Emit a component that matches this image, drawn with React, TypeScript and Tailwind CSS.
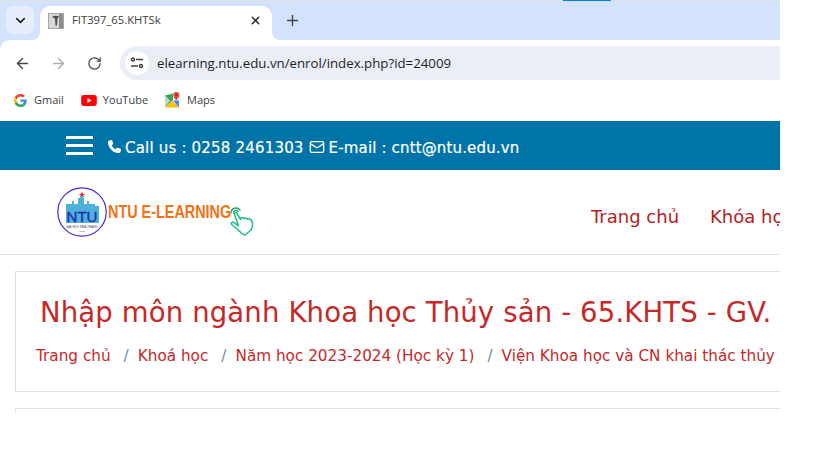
import React from 'react';
import { ChevronDown, X, Plus, ArrowLeft, ArrowRight, RotateCw, Mail } from 'lucide-react';

const ui = "font-['Open_Sans',sans-serif]";
const site = "font-['DejaVu_Sans',sans-serif]";

const GoogleIcon = () => (
  <svg width="13" height="13" viewBox="0 0 48 48">
    <path fill="#EA4335" d="M24 9.500c3.500 0 6.600 1.200 9.100 3.600l6.800-6.800C35.800 2.500 30.400 0 24 0 14.600 0 6.500 5.400 2.600 13.200l7.900 6.200C12.400 13.700 17.700 9.500 24 9.500z" />
    <path fill="#4285F4" d="M46.900 24.500c0-1.600-.1-3.100-.4-4.500H24v9h12.900c-.6 3-2.200 5.500-4.700 7.200l7.700 6c4.500-4.200 7-10.300 7-17.700z" />
    <path fill="#FBBC05" d="M10.500 28.600c-.5-1.500-.8-3-.8-4.600s.3-3.100.8-4.600l-7.900-6.200C.9 16.500 0 20.100 0 24s.9 7.500 2.600 10.800l7.900-6.200z" />
    <path fill="#34A853" d="M24 48c6.500 0 11.900-2.100 15.900-5.800l-7.700-6c-2.200 1.400-4.900 2.300-8.200 2.300-6.300 0-11.600-4.200-13.500-9.900l-7.900 6.200C6.500 42.600 14.600 48 24 48z" />
  </svg>
);

const YoutubeIcon = () => (
  <svg width="16" height="11" viewBox="0 0 17 12" className="block">
    <rect width="17" height="12" rx="3" fill="#f00" />
    <path d="M6.800 3.400 11.300 6l-4.500 2.600z" fill="#fff" />
  </svg>
);

const MapsIcon = () => (
  <svg width="15" height="16" viewBox="0 0 15 16" className="block">
    <path d="M0 3.500 8 1.500V8L0 15z" fill="#34a853" />
    <path d="M0 3.500 5 8.500 0 15z" fill="#c7d4cc" />
    <path d="M0 15.500 7 8.500l7 7z" fill="#fbbc04" />
    <path d="M8 8.500l6 7V8.500z" fill="#4285f4" />
    <path d="M11.300 0a3 3 0 0 0-3 3c0 2.200 3 5.500 3 5.500s3-3.300 3-5.500a3 3 0 0 0-3-3z" fill="#ea4335" />
    <circle cx="11.300" cy="3" r="1" fill="#a52714" />
  </svg>
);

const TuneIcon = () => (
  <svg width="14" height="12" viewBox="0 0 14 12" fill="none" stroke="#3c4043" strokeWidth="1.400">
    <circle cx="3" cy="2.500" r="1.500" />
    <path d="M6 2.500h7M1 9h7" />
    <circle cx="11" cy="9" r="1.500" />
  </svg>
);

const TabFavicon = () => (
  <svg width="16" height="16" viewBox="0 0 16 16" className="block">
    <rect x="0.500" y="0.500" width="15" height="15" fill="#d8d8d8" stroke="#a8a8a8" />
    <rect x="11" y="1" width="4" height="14" fill="#8c8c8c" />
    <path d="M4 4c2-1.500 5-1.500 7-.5L9.500 5.500l-.5 7H7.500L7 5.500z" fill="#4c4c4c" />
  </svg>
);

const PhoneIcon = () => (
  <svg width="13" height="13" viewBox="0 0 512 512" fill="#fff" className="block">
    <path d="M164.900 24.600c-7.700-18.600-28-28.500-47.400-23.200l-88 24C12.100 30.200 0 46 0 64c0 247.400 200.600 448 448 448 18 0 33.800-12.100 38.600-29.500l24-88c5.300-19.400-4.600-39.700-23.200-47.400l-96-40c-16.300-6.800-35.200-2.100-46.300 11.600L304.700 368c-70.400-33.300-127.400-90.300-160.700-160.700l49.300-40.300c13.700-11.200 18.400-30 11.600-46.300l-40-96z" />
  </svg>
);

const Logo = () => (
  <svg width="50" height="50" viewBox="0 0 50 50" className="block shrink-0">
    <circle cx="25" cy="25" r="24.200" fill="#fff" stroke="#4a2be0" strokeWidth="1.200" />
    <path d="M25 4.500l1 2.300 2.300.1-1.800 1.400.6 2.200-2.100-1.300-2.100 1.300.6-2.200-1.800-1.400 2.300-.1z" fill="#d33" />
    <path d="M9 36V17h6v-3h2v3h4V11h2V9h3v2h1v6h3v-3h2v3h6v2h4v17z" fill="#4fb0dc" />
    <text x="25" y="35" textAnchor="middle" fontSize="15" fontFamily="Liberation Sans" fontWeight="400" stroke="#1c2fb0" strokeWidth="0.400" fill="#1c2fb0">NTU</text>
    <text x="25" y="40.500" textAnchor="middle" fontSize="3" fontFamily="Liberation Sans" fill="#345">ĐẠI HỌC NHA TRANG</text>
    <text x="25" y="44.500" textAnchor="middle" fontSize="2.500" fontFamily="Liberation Sans" fill="#345">1959</text>
  </svg>
);

const HandIcon = () => (
  <svg width="26" height="30" viewBox="0 0 26 30" fill="none" stroke="#1fbf8a" strokeWidth="1.500" strokeLinejoin="round" strokeLinecap="round" className="block">
    <path d="M2 7a5 5 0 0 1 9-3" stroke="#25a56f" />
    <path d="M4.500 7a2.500 2.500 0 0 1 4.500-1.500" stroke="#25a56f" />
    <path d="M5.500 8.500c-.6-1.800 1.600-2.600 2.500-1l3.700 6 .2-1.500c1.400-.8 2.600-.4 3.100.8l.3-.6c1.300-.6 2.600-.2 3.100 1l.4-.3c2-.3 3.800 1 4.500 3.400.7 2.800-.2 6-1.800 8.200L16 29c-2.500-.5-4.500-2.300-6-4.200L2.600 18.500c-1.200-1.500.7-3.300 2.300-2.200l4.600 3.500z" />
  </svg>
);

const crumbs = ['Trang chủ', 'Khoá học', 'Năm học 2023-2024 (Học kỳ 1)', 'Viện Khoa học và CN khai thác thủy'];

export default function App() {
  return (
    <div className="h-[460px] w-[819px] overflow-hidden bg-white">
      <div className="w-[780px] overflow-hidden">
        {/* browser tab strip */}
        <div className="relative flex h-10 items-end bg-[#d3e3fd] pl-[6px]">
          <div className="absolute left-0 right-0 top-0 h-px bg-[#dfe1e5]" />
          <div className="absolute left-[563px] top-0 h-px w-[48px] bg-[#0b7de0]" />
          <button className="mb-[6px] flex h-[28px] w-[28px] items-center justify-center rounded-lg bg-[#e6eefb]">
            <ChevronDown size={15} strokeWidth={2.500} className="text-[#1f1f1f]" />
          </button>
          <div className={`relative ml-[6px] flex h-[34px] w-[232px] items-center rounded-t-[10px] bg-white pb-[5px] pl-[8px] pr-[10px] text-[11.250px] text-[#3c4043] ${ui}`}>
            <div className="absolute -left-[8px] bottom-0 h-2 w-2 bg-white">
              <div className="h-2 w-2 rounded-br-lg bg-[#d3e3fd]" />
            </div>
            <div className="absolute -right-[8px] bottom-0 h-2 w-2 bg-white">
              <div className="h-2 w-2 rounded-bl-lg bg-[#d3e3fd]" />
            </div>
            <TabFavicon />
            <span className="ml-[8px] flex-1">FIT397_65.KHTSk</span>
            <X size={13} strokeWidth={2.500} className="text-[#1f1f1f]" />
          </div>
          <Plus size={17} strokeWidth={2} className="mb-[11px] ml-[12px] text-[#444746]" />
        </div>
        {/* toolbar */}
        <div className="bg-[#d3e3fd]">
          <div className="flex h-[46px] items-center rounded-tl-[10px] bg-white">
            <ArrowLeft size={17} strokeWidth={2} className="ml-[14px] text-[#474747]" />
            <ArrowRight size={17} strokeWidth={2} className="ml-[19px] text-[#aeaeae]" />
            <RotateCw size={15} strokeWidth={2} className="ml-[20px] text-[#474747]" />
            <div className={`ml-[18px] flex h-[34px] flex-1 items-center rounded-l-[17px] bg-[#e9eef7] pl-[5px] text-[13.250px] text-[#1f1f1f] ${ui}`}>
              <span className="flex h-[24px] w-[24px] items-center justify-center rounded-full bg-white"><TuneIcon /></span>
              <span className="ml-[8px] pt-[1px]">elearning.ntu.edu.vn/enrol/index.php?id=24009</span>
            </div>
          </div>
        </div>
        {/* bookmarks */}
        <div className={`flex h-[35px] items-center bg-white pb-[7px] pl-[14px] text-[11px] text-[#3c4043] ${ui}`}>
          <GoogleIcon />
          <span className="ml-[7px]">Gmail</span>
          <span className="ml-[17px]"><YoutubeIcon /></span>
          <span className="ml-[6px]">YouTube</span>
          <span className="ml-[17px]"><MapsIcon /></span>
          <span className="ml-[7px]">Maps</span>
        </div>
        {/* site top bar */}
        <div className={`flex h-[49px] items-center bg-[#0073a8] pl-[66px] text-[15px] text-white ${site}`}>
          <div className="flex w-[27px] flex-col gap-[5px]">
            <span className="h-[3px] bg-white" />
            <span className="h-[3px] bg-white" />
            <span className="h-[3px] bg-white" />
          </div>
          <span className="ml-[15px] mt-[2px]"><PhoneIcon /></span>
          <span className="ml-[4px] mt-[5px] tracking-[0.190px] [-webkit-text-stroke:0.200px_white]">Call us : 0258 2461303</span>
          <Mail size={16} strokeWidth={2} className="ml-[5px] mt-[3px]" />
          <span className="ml-[4px] mt-[5px] tracking-[0.150px] [-webkit-text-stroke:0.200px_white]">E-mail : cntt@ntu.edu.vn</span>
        </div>
        {/* site nav */}
        <div className="flex h-[85px] items-center border-b border-[#e3e3e3] bg-white pl-[57px]">
          <Logo />
          <div className="flex w-[198px] shrink-0 items-center">
            <span className="ml-[1px] inline-block w-[124px] origin-left scale-x-[0.8] whitespace-nowrap font-['Liberation_Sans',sans-serif] text-[18px] font-bold leading-none text-[#f47216]">NTU E-LEARNING</span>
            <span className="-ml-[3px] mt-[17px]"><HandIcon /></span>
          </div>
          <nav className={`ml-[286px] mt-[9px] flex shrink-0 gap-[31px] whitespace-nowrap text-[18px] text-[#b71c1c] ${site}`}>
            <span>Trang chủ</span>
            <span>Khóa học</span>
          </nav>
        </div>
        {/* course header card */}
        <div className="pl-[15px] pt-[16px]">
          <div className={`w-[900px] border border-[#e0e0e0] bg-white pb-[25px] pl-[20px] pt-[21px] ${site}`}>
            <h1 className="ml-[4px] whitespace-nowrap text-[27.500px] leading-[39px] tracking-[0.150px] text-[#c62828]">Nhập môn ngành Khoa học Thủy sản - 65.KHTS - GV.</h1>
            <div className="mt-[14px] flex whitespace-nowrap text-[15.250px] leading-[20px] text-[#c62828]">
              {crumbs.map((c, i) => (
                <span key={c} className="flex">
                  {i > 0 && <span className="ml-[13px] mr-[9px] text-[#6c8ca8]">/</span>}
                  {c}
                </span>
              ))}
            </div>
          </div>
          <div className="mt-[16px] h-[5px] w-[900px] border-l border-t border-[#e0e0e0] bg-white" />
        </div>
      </div>
    </div>
  );
}
